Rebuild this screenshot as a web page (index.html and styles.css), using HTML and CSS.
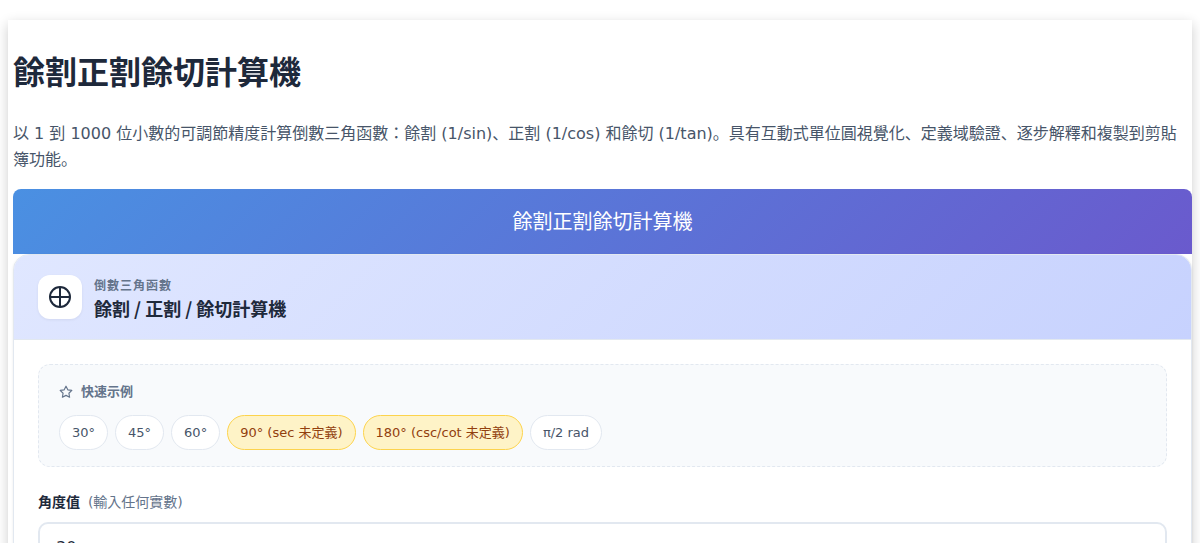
FILE: index.html
```
<!DOCTYPE html>
<html lang="zh-Hant">
<head>
    <meta charset="UTF-8">
    <meta name="viewport" content="width=device-width, initial-scale=1.0">
    <title>餘割正割餘切計算機</title>
    <link rel="stylesheet" href="styles.css">
</head>
<body>

<main class="page">
    <h1>餘割正割餘切計算機</h1>
    <p class="intro">以 1 到 1000 位小數的可調節精度計算倒數三角函數：餘割 (1/sin)、正割 (1/cos) 和餘切 (1/tan)。具有互動式單位圓視覺化、定義域驗證、逐步解釋和複製到剪貼簿功能。</p>

    <div class="banner">餘割正割餘切計算機</div>

    <section class="card">
        <div class="card-header">
            <div class="card-icon">
                <svg width="24" height="24" viewBox="0 0 24 24" fill="none" stroke="currentColor" stroke-width="2">
                    <circle cx="12" cy="12" r="10"/>
                    <path d="M12 2v20M2 12h20"/>
                </svg>
            </div>
            <div>
                <div class="card-kicker">倒數三角函數</div>
                <h2 class="card-title">餘割 / 正割 / 餘切計算機</h2>
            </div>
        </div>

        <form class="card-body" id="calcForm">
            <div class="examples">
                <div class="examples-title">
                    <svg width="14" height="14" viewBox="0 0 24 24" fill="none" stroke="currentColor" stroke-width="2" stroke-linejoin="round">
                        <polygon points="12 2 15.09 8.26 22 9.27 17 14.14 18.18 21.02 12 17.77 5.82 21.02 7 14.14 2 9.27 8.91 8.26 12 2"/>
                    </svg>
                    快速示例
                </div>
                <div class="chips">
                    <button type="button" class="chip" data-angle="30">30°</button>
                    <button type="button" class="chip" data-angle="45">45°</button>
                    <button type="button" class="chip" data-angle="60">60°</button>
                    <button type="button" class="chip warning" data-angle="90">90° (sec 未定義)</button>
                    <button type="button" class="chip warning" data-angle="180">180° (csc/cot 未定義)</button>
                    <button type="button" class="chip" data-angle="pi/2">π/2 rad</button>
                </div>
            </div>

            <div class="field">
                <label for="angle">角度值 <span class="hint">(輸入任何實數)</span></label>
                <input type="text" id="angle" name="angle" value="30">
            </div>
        </form>
    </section>
</main>

<script>
    // 點擊示例時填入角度
    document.querySelectorAll('.chip').forEach(function(chip) {
        chip.addEventListener('click', function() {
            document.getElementById('angle').value = chip.dataset.angle;
        });
    });
</script>

</body>
</html>
```
FILE: styles.css
```
* {
    box-sizing: border-box;
}
body {
    font-family: "DejaVu Sans", "Noto Sans CJK JP", sans-serif;
    font-feature-settings: "locl" 0;
    font-size: 16px;
    line-height: 26px;
    color: #1e293b;
    background-color: white;
    margin: 0;
    padding: 20px 8px;
}
.page {
    background-color: white;
    padding: 33px 0 20px 5px;
    box-shadow: 0 4px 12px rgba(0, 0, 0, 0.2);
}
h1 {
    font-size: 32px;
    line-height: 40px;
    margin: 0 0 28px;
}
.intro {
    color: #475569;
    margin: 0 0 16px;
}
.banner {
    padding: 21px 20px 19px;
    font-size: 20px;
    line-height: 25px;
    text-align: center;
    color: white;
    background: linear-gradient(135deg, #4a90e2, #6a5acd);
    border-radius: 8px 8px 0 0;
}
.card {
    border: 1px solid #e2e8f0;
    border-radius: 16px;
    overflow: hidden;
    background-color: white;
    box-shadow: 0 1px 3px rgba(0, 0, 0, 0.08);
}
.card-header {
    display: flex;
    align-items: center;
    gap: 12px;
    padding: 20px 24px;
    border-bottom: 1px solid #e2e8f0;
    background: linear-gradient(135deg, #e0e7ff, #c7d2fe);
}
.card-icon {
    display: flex;
    align-items: center;
    justify-content: center;
    width: 44px;
    height: 44px;
    border-radius: 12px;
    background-color: white;
    box-shadow: 0 1px 3px rgba(0, 0, 0, 0.06);
}
.card-kicker {
    font-size: 12px;
    line-height: 22px;
    font-weight: 600;
    letter-spacing: 1px;
    color: #64748b;
}
.card-title {
    font-family: "Noto Sans CJK JP", sans-serif;
    font-size: 18px;
    line-height: 22px;
    margin: 0;
}
.card-body {
    padding: 24px;
}
.examples {
    padding: 16px 20px;
    margin-bottom: 24px;
    border: 1px dashed #e2e8f0;
    border-radius: 12px;
    background-color: #f8fafc;
}
.examples-title {
    display: flex;
    align-items: center;
    gap: 8px;
    margin-bottom: 12px;
    font-size: 13px;
    line-height: 22px;
    font-weight: 600;
    color: #64748b;
}
.chips {
    display: flex;
    flex-wrap: wrap;
    gap: 7px;
}
.chip {
    padding: 6px 12px;
    font-family: inherit;
    font-size: 13px;
    line-height: 21px;
    color: #475569;
    background-color: white;
    border: 1px solid #e2e8f0;
    border-radius: 20px;
    cursor: pointer;
}
.chip.warning {
    color: #92400e;
    background-color: #fef3c7;
    border-color: #fcd34d;
}
.field {
    display: flex;
    flex-direction: column;
    gap: 8px;
}
label {
    font-size: 14px;
    line-height: 23px;
    font-weight: 600;
}
.hint {
    margin-left: 3px;
    font-weight: 400;
    color: #64748b;
}
input {
    width: 100%;
    padding: 14px 16px;
    font-family: inherit;
    font-size: 16px;
    color: #1e293b;
    border: 2px solid #e2e8f0;
    border-radius: 10px;
}
```
